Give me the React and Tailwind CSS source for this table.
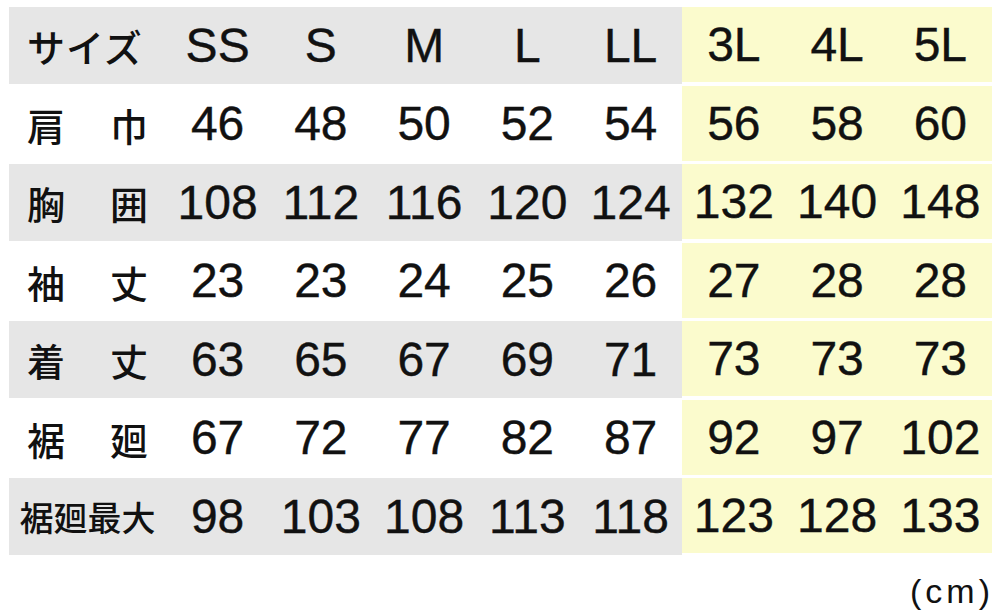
const sizes = ["SS", "S", "M", "L", "LL", "3L", "4L", "5L"];

const rows = [
  { label: ["肩", "巾"], values: [46, 48, 50, 52, 54, 56, 58, 60] },
  { label: ["胸", "囲"], values: [108, 112, 116, 120, 124, 132, 140, 148] },
  { label: ["袖", "丈"], values: [23, 23, 24, 25, 26, 27, 28, 28] },
  { label: ["着", "丈"], values: [63, 65, 67, 69, 71, 73, 73, 73] },
  { label: ["裾", "廻"], values: [67, 72, 77, 82, 87, 92, 97, 102] },
  { label: "裾廻最大", values: [98, 103, 108, 113, 118, 123, 128, 133] },
];

const jp = { fontFamily: '"Noto Sans CJK JP", sans-serif' };
const num = { fontFamily: '"Liberation Sans", Arial, sans-serif' };

function Cell({ children }) {
  return (
    <div className="w-[103.25px] shrink-0 flex items-center justify-center text-[48px] text-[#111] [-webkit-text-stroke:0.4px_#111]" style={num}>
      {children}
    </div>
  );
}

function Row({ gray, label, values }) {
  const normal = values.slice(0, 5);
  const big = values.slice(5);
  return (
    <div className={"flex " + (gray ? "h-[77px]" : "h-[80px]")}>
      <div className={"flex " + (gray ? "bg-[#e6e6e6]" : "bg-white")}>
        <div className="w-[157px] shrink-0 flex items-center text-[#111]" style={jp}>
          {Array.isArray(label) ? (
            <div className="w-full flex justify-between px-[18px] text-[38px] font-medium">
              <span>{label[0]}</span>
              <span>{label[1]}</span>
            </div>
          ) : label === "サイズ" ? (
            <div className="w-full px-[18px] text-[38px] font-medium tracking-[1px]">{label}</div>
          ) : (
            <div className="w-full text-center text-[34px] font-medium">{label}</div>
          )}
        </div>
        {normal.map((v, i) => (
          <Cell key={i}>{v}</Cell>
        ))}
      </div>
      <div className={"flex bg-[#fbfbcd] " + (gray ? "mb-[2px]" : "mt-[2px] mb-[3px]")}>
        {big.map((v, i) => (
          <Cell key={i}>{v}</Cell>
        ))}
      </div>
    </div>
  );
}

export default function App() {
  return (
    <div className="w-[1000px] h-[616px] bg-white pt-[7px] pl-[9px]">
      <Row gray label="サイズ" values={sizes} />
      {rows.map((r, i) => (
        <Row key={i} gray={i % 2 === 1} label={r.label} values={r.values} />
      ))}
      <div className="w-[983px] flex justify-end pt-[19px]">
        <span className="text-[34px] leading-none text-[#111] tracking-[4px] mr-[-2px]" style={num}>
          (cm)
        </span>
      </div>
    </div>
  );
}
